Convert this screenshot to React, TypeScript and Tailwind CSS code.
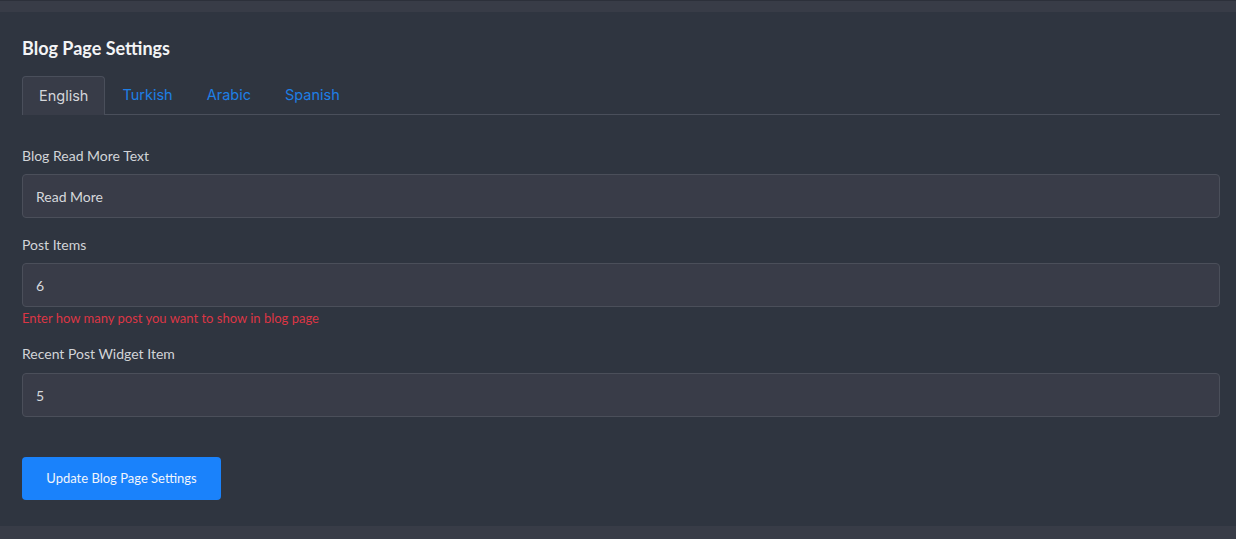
import React from "react";

export default function App() {
  const tabs = ["English", "Turkish", "Arabic", "Spanish"];
  return (
    <div className="w-[1236px] h-[539px] bg-[#383c47] flex flex-col overflow-hidden" style={{ fontFamily: "Lato, 'Open Sans', sans-serif" }}>
      <div className="h-[1px] bg-[#2c303a]" />
      <div className="h-[11px]" />
      <div className="bg-[#2f3540] pl-[22px] pr-[16px] pt-[24px] pb-[26px] flex flex-col">
        <h1 className="text-[18px] leading-[24px] font-bold text-[#f3f4f6]">Blog Page Settings</h1>
        <div className="mt-[16px] flex border-b border-[#4a4f5b]">
          {tabs.map((t, i) => (
            <div
              key={t}
              className={
                i === 0
                  ? "px-[16px] flex items-center border border-b-0 border-[#4a4f5b] rounded-t-[4px] bg-[#383c48] text-[#d4d6da] text-[14.5px] -mb-[1px] h-[39px]"
                  : "h-[38px] px-[17px] flex items-center text-[#1e7fe6] text-[14.5px]"
              }
              style={{ fontFamily: "Inter, 'Open Sans', sans-serif" }}
            >
              {t}
            </div>
          ))}
        </div>

        <label className="mt-[30px] text-[14px] leading-[22px] text-[#d2d4d8]">Blog Read More Text</label>
        <div className="mt-[7px] h-[44px] rounded-[4px] border border-[#4b4f5a] bg-[#393c48] flex items-center px-[13px] text-[14px] text-[#d6d8dc]">Read More</div>

        <label className="mt-[16px] text-[14px] leading-[22px] text-[#d2d4d8]">Post Items</label>
        <div className="mt-[7px] h-[44px] rounded-[4px] border border-[#4b4f5a] bg-[#393c48] flex items-center px-[13px] text-[14px] text-[#d6d8dc]">6</div>
        <div className="mt-[1px] text-[13px] leading-[20px] text-[#dc3545]">Enter how many post you want to show in blog page</div>

        <label className="mt-[15px] text-[14px] leading-[22px] text-[#d2d4d8]">Recent Post Widget Item</label>
        <div className="mt-[8px] h-[44px] rounded-[4px] border border-[#4b4f5a] bg-[#393c48] flex items-center px-[13px] text-[14px] text-[#d6d8dc]">5</div>

        <div className="mt-[40px]">
          <button className="h-[43px] w-[199px] rounded-[4px] bg-[#1a82fb] text-[#f1f5fb] text-[13px] flex items-center justify-center">
            Update Blog Page Settings
          </button>
        </div>
      </div>
      <div className="flex-1 bg-[#383c47]" />
    </div>
  );
}
